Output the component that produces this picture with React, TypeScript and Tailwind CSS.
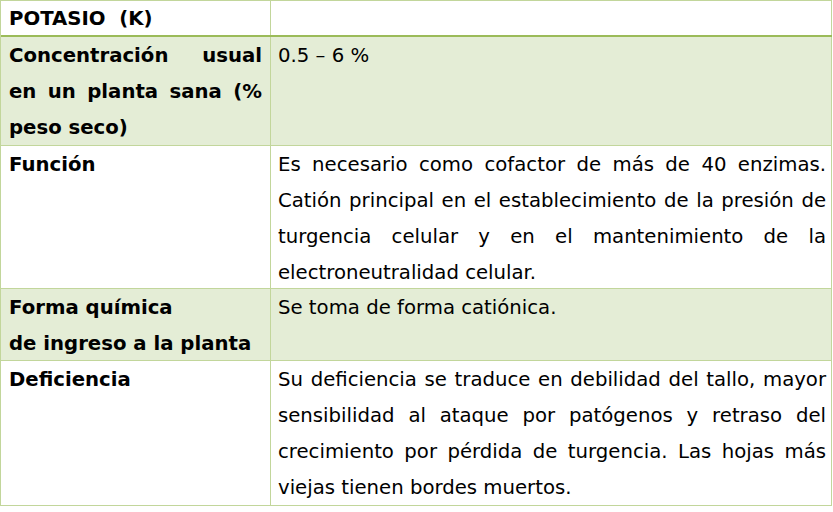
const J = 'text-justify [text-align-last:justify]';

type Line = { text: string; justify?: boolean };

function Lines({ lines }: { lines: Line[] }) {
  return (
    <>
      {lines.map((l, i) => (
        <div key={i} className={l.justify ? J : 'text-left'}>
          {l.text}
        </div>
      ))}
    </>
  );
}

const rows = [
  {
    h: 'h-[108px]',
    bg: 'bg-[#e4edd6]',
    label: [
      { text: 'Concentración usual', justify: true },
      { text: 'en un planta sana (%', justify: true },
      { text: 'peso seco)' },
    ],
    value: [{ text: '0.5 – 6 %' }],
  },
  {
    h: 'h-[142px]',
    bg: 'bg-white',
    label: [{ text: 'Función' }],
    value: [
      { text: 'Es necesario como cofactor de más de 40 enzimas.', justify: true },
      { text: 'Catión principal en el establecimiento de la presión de', justify: true },
      { text: 'turgencia celular y en el mantenimiento de la', justify: true },
      { text: 'electroneutralidad celular.' },
    ],
  },
  {
    h: 'h-[71px]',
    bg: 'bg-[#e4edd6]',
    label: [{ text: 'Forma química' }, { text: 'de ingreso a la planta' }],
    value: [{ text: 'Se toma de forma catiónica.' }],
  },
  {
    h: 'h-[144px]',
    bg: 'bg-white',
    label: [{ text: 'Deficiencia' }],
    value: [
      { text: 'Su deficiencia se traduce en debilidad del tallo, mayor', justify: true },
      { text: 'sensibilidad al ataque por patógenos y retraso del', justify: true },
      { text: 'crecimiento por pérdida de turgencia. Las hojas más', justify: true },
      { text: 'viejas tienen bordes muertos.' },
    ],
  },
];

export default function App() {
  return (
    <div className="w-[833px] h-[512px] bg-white text-black font-['DejaVu_Sans',sans-serif] text-[19.7px] leading-[36px]">
      <div className="w-[832px] border-l border-t border-[#c2d69b]">
        {/* header */}
        <div className="flex h-[36px] border-b-2 border-[#9bbb59]">
          <div className="w-[270px] h-full border-r border-[#c2d69b] pl-[8px] pt-[3px] leading-[30px] font-bold whitespace-pre">
            POTASIO  (K)
          </div>
          <div className="flex-1 h-full border-r border-[#c2d69b]" />
        </div>

        {rows.map((r, i) => (
          <div key={i} className={`flex border-b border-[#c2d69b] ${r.bg}`}>
            <div className={`w-[270px] ${r.h} border-r border-[#c2d69b] pl-[8px] pr-[8px] pt-px font-bold`}>
              <Lines lines={r.label} />
            </div>
            <div className={`flex-1 ${r.h} border-r border-[#c2d69b] pl-[7px] pr-[5px] pt-px`}>
              <Lines lines={r.value} />
            </div>
          </div>
        ))}
      </div>
    </div>
  );
}
